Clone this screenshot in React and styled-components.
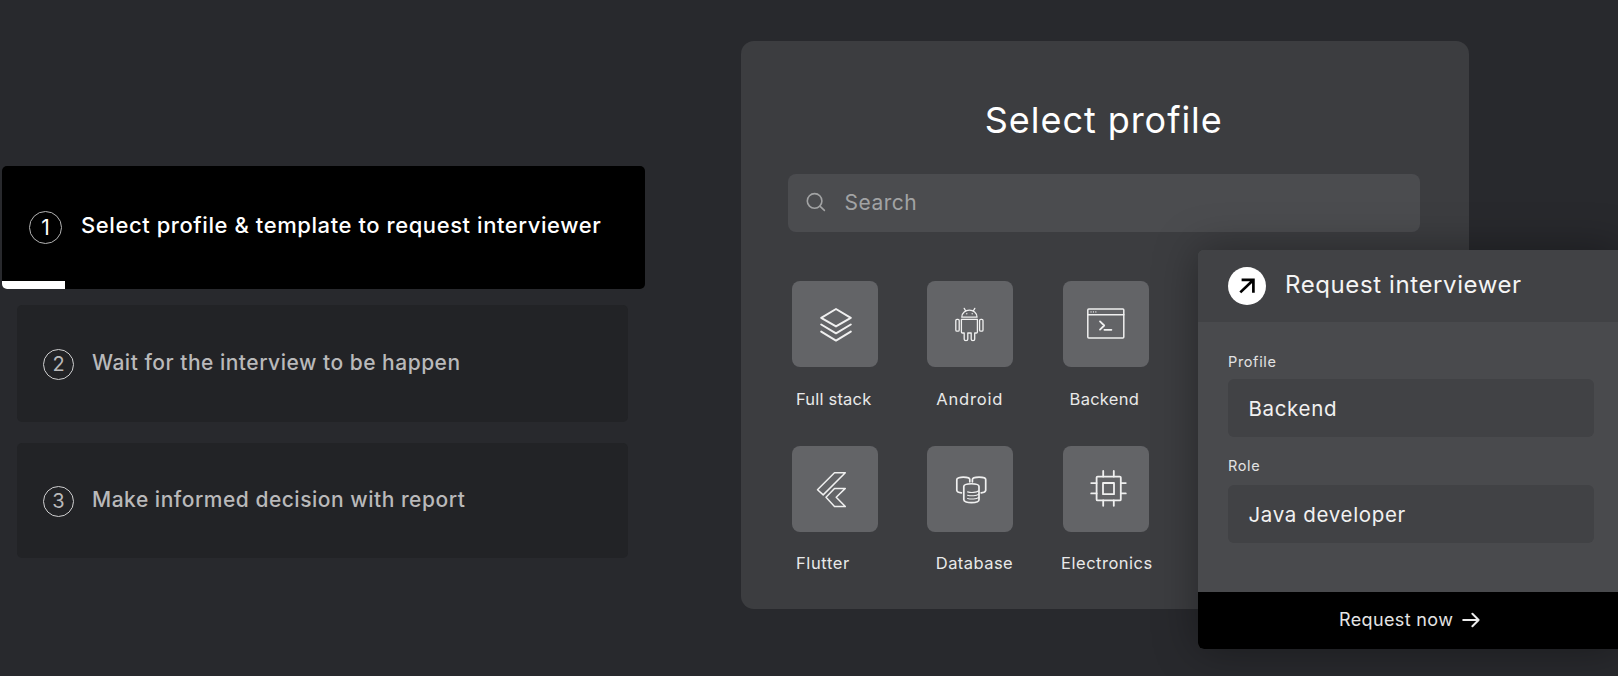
import React from "react";
import styled, { createGlobalStyle } from "styled-components";

const GlobalStyle = createGlobalStyle`
  *, *::before, *::after { box-sizing: border-box; }
  html, body { margin: 0; background: #28292d; }
  body {
    font-family: Inter, "Liberation Sans", sans-serif;
    color: #fff;
    overflow: hidden;
  }
`;

const Page = styled.main`
  position: relative;
  display: flex;
  align-items: flex-start;
  width: 1618px;
  height: 676px;
  overflow: hidden;
  background: #28292d;
`;

/* Steps */

const Steps = styled.ol`
  display: flex;
  flex-direction: column;
  flex: none;
  width: 741px;
  margin: 0;
  padding: 166px 0 0 2px;
  list-style: none;
`;

const Step = styled.li`
  display: flex;
  align-items: center;
  position: relative;
  overflow: hidden;
  width: ${(p) => (p.$active ? 643 : 611)}px;
  height: ${(p) => p.$height}px;
  margin: 0 0 ${(p) => p.$after}px ${(p) => (p.$active ? 0 : 15)}px;
  padding-left: ${(p) => (p.$active ? 27 : 26)}px;
  gap: ${(p) => (p.$active ? 19 : 18)}px;
  border-radius: 5px;
  background: ${(p) => (p.$active ? "#000" : "#222326")};
  color: ${(p) => (p.$active ? "#fff" : "#b9b9ba")};
`;

const StepNumber = styled.span`
  display: flex;
  align-items: center;
  justify-content: center;
  flex: none;
  width: ${(p) => (p.$active ? 33 : 31)}px;
  height: ${(p) => (p.$active ? 33 : 31)}px;
  margin-top: ${(p) => (p.$active ? -1 : 1)}px;
  border: 1px solid ${(p) => (p.$active ? "#b4b4b4" : "#cfcfd0")};
  border-radius: 50%;
  font-size: ${(p) => (p.$active ? 21 : 20)}px;
  line-height: 1;
`;

const StepText = styled.span`
  margin-top: ${(p) => (p.$active ? -5 : -1)}px;
  font-size: ${(p) => (p.$active ? 22 : 21)}px;
  font-weight: 500;
  letter-spacing: ${(p) => p.$tracking}px;
  line-height: 28px;
  white-space: nowrap;
`;

const StepProgress = styled.span`
  position: absolute;
  left: 0;
  bottom: 0;
  width: 63px;
  height: 8px;
  background: #fff;
`;

/* Profile picker */

const Panel = styled.section`
  flex: none;
  width: 727.5px;
  height: 568px;
  margin-top: 41px;
  padding: 56px 48.5px 0 46.5px;
  border-radius: 13px;
  background: #3c3d40;
`;

const PanelTitle = styled.h1`
  margin: 0 0 29px;
  font-size: 36px;
  font-weight: 400;
  letter-spacing: 0.95px;
  line-height: 47.5px;
  text-align: center;
`;

const SearchBox = styled.div`
  display: flex;
  align-items: center;
  height: 58.5px;
  padding: 0 18px;
  gap: 19px;
  border-radius: 8px;
  background: #4b4c4f;
  color: #a2a3a4;
  font-size: 21px;
  letter-spacing: 0.5px;

  svg { margin-top: -2px; }
`;

const ProfileGrid = styled.div`
  display: grid;
  grid-template-columns: repeat(3, 86px);
  grid-auto-rows: 164.5px;
  column-gap: 49.3px;
  margin: 49.2px 0 0 4.5px;
`;

const Profile = styled.div`
  display: flex;
  flex-direction: column;
  gap: 21.5px;
`;

const Tile = styled.div`
  flex: none;
  width: 86px;
  height: 86px;
  border-radius: 8px;
  background: #636467;

  svg { display: block; }
`;

const ProfileName = styled.span`
  margin-left: ${(p) => p.$offset}px;
  color: #e9e9e9;
  font-size: 16.5px;
  letter-spacing: ${(p) => p.$tracking}px;
  line-height: 20px;
  white-space: nowrap;
`;

/* Request card, floating over the picker */

const CardShadow = styled.div`
  position: absolute;
  left: 1198px;
  top: 249.5px;
  width: 424px;
  height: 399.5px;
  border-radius: 6px;
  box-shadow: 0 0 44px rgba(0, 0, 0, 0.36);
`;

const RequestCard = styled.aside`
  position: absolute;
  left: 1198px;
  top: 249.5px;
  width: 424px;
  border-radius: 6px 0 0 6px;
  overflow: hidden;
  background: #494a4d;
`;

const CardHeader = styled.header`
  display: flex;
  align-items: center;
  height: 72.5px;
  padding-left: 30px;
  gap: 19px;
  background: #414245;
  color: #f4f4f4;
  font-size: 24px;
  letter-spacing: 0.6px;
  line-height: 30px;
`;

const HeaderText = styled.span`
  margin-top: -2px;
`;

const ArrowBadge = styled.span`
  display: flex;
  flex: none;
  width: 38px;
  height: 38px;
  border-radius: 50%;
  background: #fff;
`;

const CardBody = styled.div`
  height: 269.5px;
  padding: 30px 24.5px 0 30px;
`;

const FieldLabel = styled.div`
  height: 20px;
  margin-bottom: ${(p) => p.$gap}px;
  color: #e2e2e3;
  font-size: 14.5px;
  letter-spacing: 0.65px;
  line-height: 20px;
`;

const Field = styled.div`
  display: flex;
  align-items: center;
  width: 365.5px;
  height: 58px;
  margin-bottom: ${(p) => p.$after || 0}px;
  padding-left: ${(p) => p.$indent}px;
  border-radius: 6px;
  background: #414245;
  color: #f1f1f1;
  font-size: 20.5px;
  letter-spacing: 0.65px;
`;

const RequestButton = styled.button`
  display: flex;
  align-items: center;
  width: 100%;
  height: 57.5px;
  padding: 0 0 0 141px;
  gap: 9px;
  border: 0;
  background: #000;
  color: #e4e4e4;
  font: 400 18px/24px Inter, "Liberation Sans", sans-serif;
  letter-spacing: 0.36px;
`;

/* Icons: drawn on the 86px square of a tile */

const TileIcon = ({ weight = 1.5, children }) => (
  <svg
    width="86"
    height="86"
    viewBox="0 0 86 86"
    fill="none"
    stroke="#f0f0f0"
    strokeWidth={weight}
    strokeLinecap="round"
    strokeLinejoin="round"
  >
    {children}
  </svg>
);

const LayersIcon = () => (
  <TileIcon weight={2}>
    <path d="M44 28 L58.8 36.8 L44 45.4 L29.2 36.8 Z" />
    <path d="M29.2 43.5 L44 52.3 L58.8 43.5" />
    <path d="M29.2 50.6 L44 59.6 L58.8 50.6" />
  </TileIcon>
);

const AndroidIcon = () => (
  <TileIcon weight={1.3}>
    <path d="M34.8 36.2 C34.8 26.8 50 26.8 50 36.2 Z" />
    <path d="M37.2 27.4 L38.7 30 M47.8 27.4 L46.3 30" />
    <path d="M39.8 32.6 v.2 M45.2 32.6 v.2" />
    <path d="M34.4 38.4 H50.4 V51 Q50.4 52 49.4 52 H47.7 V58.2 Q47.7 59.6 46 59.6 Q44.2 59.6 44.2 58.2 V52 H40.8 V58.2 Q40.8 59.6 39 59.6 Q37.2 59.6 37.2 58.2 V52 H35.4 Q34.4 52 34.4 51 Z" />
    <rect x="28.8" y="38.4" width="3.4" height="11.8" rx="1.2" />
    <rect x="52.6" y="38.4" width="3.4" height="11.8" rx="1.2" />
  </TileIcon>
);

const TerminalIcon = () => (
  <TileIcon weight={1.5}>
    <rect x="24.8" y="28" width="36" height="29" rx="1" />
    <path d="M24.8 33.7 H60.8" />
    <path d="M28 30.9 h.1 M30.4 30.9 h.1 M32.8 30.9 h.1" strokeWidth="1.2" />
    <path d="M37 40.4 L41.2 44.5 L37 48.6 M41.4 48.8 H48.4" strokeWidth="1.8" />
  </TileIcon>
);

const FlutterIcon = () => (
  <TileIcon>
    <path d="M25.5 43.7 L42.5 26.8 H53.3 L31.2 48.9 Z" />
    <path d="M34 51.3 L42.5 42.4 H53.3 L44.2 51.3 L53.3 60.6 H42.5 Z" />
  </TileIcon>
);

const DatabaseIcon = () => (
  <TileIcon weight={1.7}>
    <path d="M36.8 40.5 C36.8 36.8 52 36.8 52 40.5 V53.8 C52 57.6 36.8 57.6 36.8 53.8 Z" />
    <path d="M40.6 45.9 C44 46.9 49.5 46.6 51.8 44.8 M40.6 49.2 C44 50.2 49.5 49.9 51.8 48.1 M40.6 52.5 C44 53.5 49.5 53.2 51.8 51.4" strokeWidth="1.1" />
    <path d="M42.8 35.8 V33.6 C42.8 30.3 29.8 30.3 29.8 33.6 V44.3 Q30.2 46.4 34.4 46.8" />
    <path d="M45.4 35.8 V33.6 C45.4 30.3 58.7 30.3 58.7 33.6 V44.3 Q58.3 46.4 54.2 46.8" />
  </TileIcon>
);

const ChipIcon = () => (
  <TileIcon weight={1.8}>
    <rect x="33.6" y="30.6" width="24.2" height="23.8" rx="1" />
    <rect x="40" y="37" width="11" height="11.2" />
    <path d="M40.2 25 V30.6 M50.8 25 V30.6 M40.2 54.4 V59.8 M50.8 54.4 V59.8 M28.2 37.1 H33.6 M28.2 47.4 H33.6 M57.8 37.1 H62.8 M57.8 47.4 H62.8" />
  </TileIcon>
);

const SearchIcon = () => (
  <svg width="20" height="20" viewBox="0 0 20 20" fill="none" stroke="#a2a3a4" strokeWidth="1.6" strokeLinecap="round">
    <circle cx="8.6" cy="8.9" r="7.3" />
    <path d="M13.9 14.2 L18.4 18.4" />
  </svg>
);

const UpRightArrow = () => (
  <svg width="38" height="38" viewBox="0 0 38 38" fill="none" stroke="#000" strokeWidth="2.7">
    <path d="M12.3 25.4 L25 13.2 M13.6 12.9 H25.4 V25.8" />
  </svg>
);

const RightArrow = () => (
  <svg width="18" height="18" viewBox="0 0 18 18" fill="none" stroke="#ececec" strokeWidth="2" strokeLinecap="round" strokeLinejoin="round">
    <path d="M1.2 9 H16.6 M10.4 2.8 L16.6 9 L10.4 15.2" />
  </svg>
);

const steps = [
  { text: "Select profile & template to request interviewer", active: true, height: 123, after: 16, tracking: 0.57 },
  { text: "Wait for the interview to be happen", height: 117, after: 21, tracking: 0.5 },
  { text: "Make informed decision with report", height: 115, after: 0, tracking: 0.51 },
];

const profiles = [
  { name: "Full stack", Icon: LayersIcon, offset: 4, tracking: 0.19 },
  { name: "Android", Icon: AndroidIcon, offset: 9, tracking: 0.82 },
  { name: "Backend", Icon: TerminalIcon, offset: 7, tracking: 0.25 },
  { name: "Flutter", Icon: FlutterIcon, offset: 4, tracking: 0.62 },
  { name: "Database", Icon: DatabaseIcon, offset: 8.5, tracking: 0.44 },
  { name: "Electronics", Icon: ChipIcon, offset: -1.5, tracking: 0.5 },
];

export default function App() {
  return (
    <>
      <GlobalStyle />
      <Page>
        <Steps>
          {steps.map((s, i) => (
            <Step key={s.text} $active={s.active} $height={s.height} $after={s.after}>
              <StepNumber $active={s.active}>{i + 1}</StepNumber>
              <StepText $active={s.active} $tracking={s.tracking}>{s.text}</StepText>
              {s.active && <StepProgress />}
            </Step>
          ))}
        </Steps>

        <Panel>
          <PanelTitle>Select profile</PanelTitle>
          <SearchBox>
            <SearchIcon />
            <span>Search</span>
          </SearchBox>
          <ProfileGrid>
            {profiles.map(({ name, Icon, offset, tracking }) => (
              <Profile key={name}>
                <Tile><Icon /></Tile>
                <ProfileName $offset={offset} $tracking={tracking}>{name}</ProfileName>
              </Profile>
            ))}
          </ProfileGrid>
        </Panel>

        <CardShadow />
        <RequestCard>
          <CardHeader>
            <ArrowBadge><UpRightArrow /></ArrowBadge>
            <HeaderText>Request interviewer</HeaderText>
          </CardHeader>
          <CardBody>
            <FieldLabel $gap={7}>Profile</FieldLabel>
            <Field $after={18.5} $indent={20.5}>Backend</Field>
            <FieldLabel $gap={9.5}>Role</FieldLabel>
            <Field $indent={20.5}>Java developer</Field>
          </CardBody>
          <RequestButton>
            Request now
            <RightArrow />
          </RequestButton>
        </RequestCard>
      </Page>
    </>
  );
}
